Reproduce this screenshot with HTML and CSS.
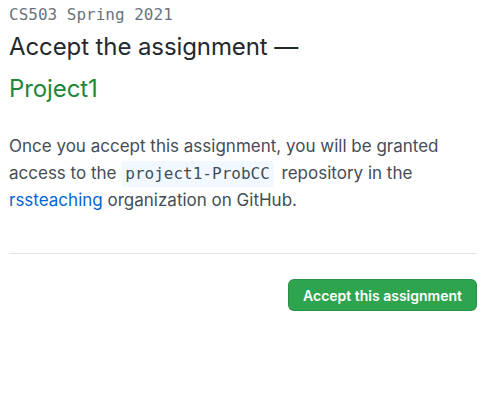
FILE: index.html
```html
<!DOCTYPE html>
<html>
<head>
<meta charset="utf-8">
<link rel="stylesheet" href="styles.css">
</head>
<body>
<div class="page">
  <div class="course">CS503 Spring 2021</div>
  <h1 class="title">Accept the assignment —<br><span class="name">Project1</span></h1>
  <p class="desc">Once you accept this assignment, you will be granted access to the <code>project1-ProbCC</code> repository in the <a href="#">rssteaching</a> organization on GitHub.</p>
  <hr class="rule">
  <div class="actions">
    <button class="btn">Accept this assignment</button>
  </div>
</div>
</body>
</html>
```
FILE: styles.css
```css
html, body { margin: 0; padding: 0; background: #fff; }
body { font-family: Inter, "Liberation Sans", Arial, sans-serif; color: #24292e; }
.page { padding: 4px 10px 0 9px; }
.course {
  font-family: "DejaVu Sans Mono", "Liberation Mono", monospace;
  font-size: 16px;
  color: #6a737d;
  line-height: 22px;
}
.title {
  margin: 0;
  font-size: 24px;
  font-weight: 400;
  line-height: 42px;
  letter-spacing: -0.1px;
}
.name { color: #22863a; }
.desc {
  margin: 23px 0 0;
  font-size: 17px;
  line-height: 27px;
  color: #444d56;
}
code {
  display: inline-block;
  font-family: "DejaVu Sans Mono", "Liberation Mono", monospace;
  font-size: 16px;
  line-height: 18px;
  background: #f1f8ff;
  border-radius: 4px;
  padding: 4px 4px;
  margin: -4px 3px -4px 0;
  color: #444d56;
}
a { color: #0366d6; text-decoration: none; }
.rule {
  border: 0;
  border-top: 1px solid #e1e4e8;
  margin: 39px 0 0;
}
.actions { display: flex; justify-content: flex-end; margin-top: 25px; }
.btn {
  background: #2ea44f;
  color: #fff;
  border: 1px solid rgba(27,31,35,0.15);
  border-radius: 6px;
  font-family: Inter, "Liberation Sans", Arial, sans-serif;
  font-size: 14px;
  font-weight: 600;
  height: 32px;
  width: 189px;
  padding: 0;
  white-space: nowrap;
}
```
